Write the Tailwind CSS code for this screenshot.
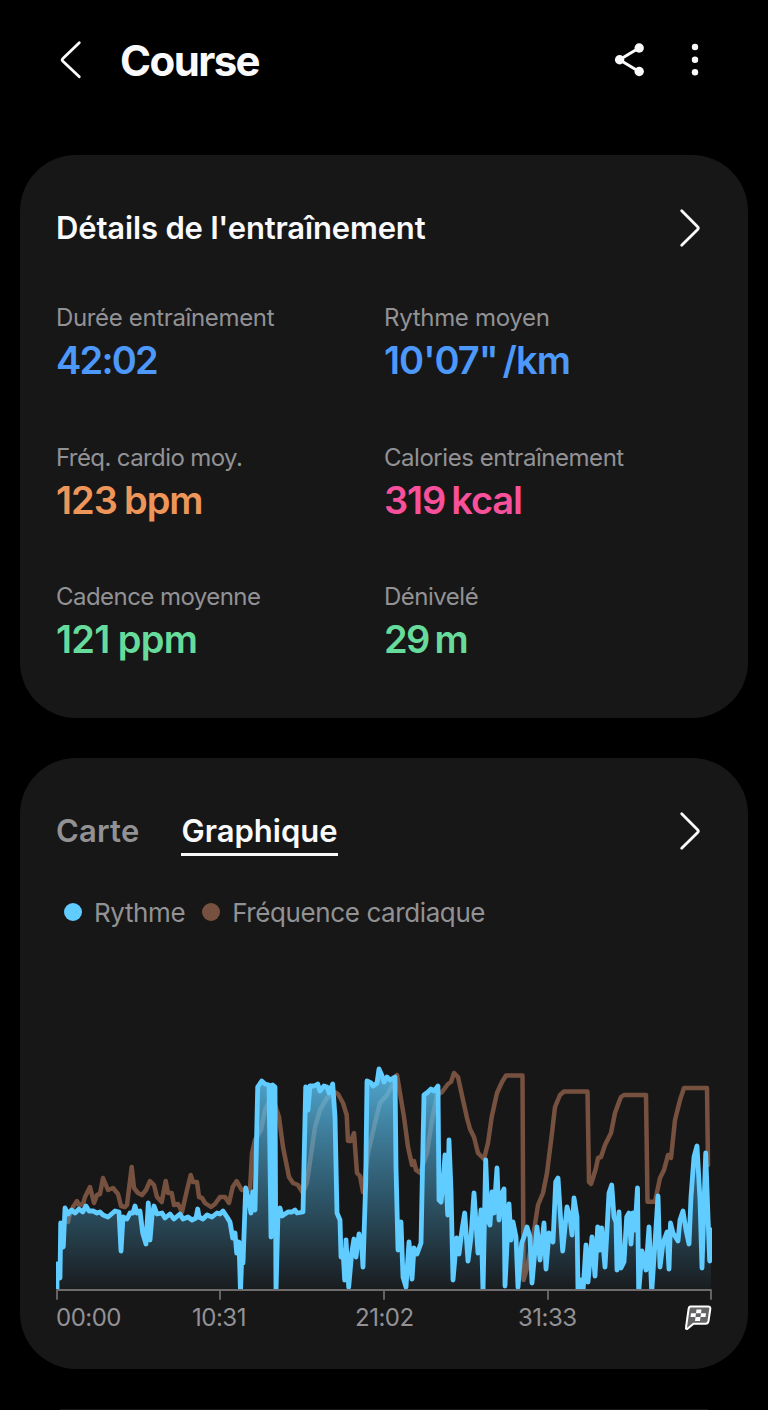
<!DOCTYPE html>
<html lang="fr">
  <head>
    <meta charset="UTF-8" />
    <meta name="viewport" content="width=device-width, initial-scale=1.0" />
    <title>Course</title>
    <script src="https://cdn.jsdelivr.net/npm/@tailwindcss/browser@4"></script>
  </head>
  <body class="bg-black font-['Inter',sans-serif] text-[#fafafc]">

    <!-- Header -->
    <header class="h-[155px] pt-[30px] pl-[56px] pr-[65px]">
      <div class="h-[60px] flex items-center">
        <svg class="w-7 h-10" viewBox="0 0 28 40" fill="none" stroke="currentColor" stroke-width="2.8" stroke-linecap="round" stroke-linejoin="round"><path d="M23.3 2.7 6.9 18.4Q5.5 19.8 6.9 21.2L23.3 36.7" /></svg>
        <h1 class="ml-9 text-[42px] font-bold tracking-[-1.6px] leading-[60px] pt-px">Course</h1>
        <svg class="ml-auto w-8 h-9" viewBox="0 0 32 36" fill="currentColor"><path d="M25 6 5.500 17.800 25 29.500" fill="none" stroke="currentColor" stroke-width="3" /><circle cx="25.200" cy="6" r="4.700" /><circle cx="5.600" cy="17.800" r="4.700" /><circle cx="25.200" cy="29.500" r="4.700" /></svg>
        <svg class="ml-[41px] w-4 h-9" viewBox="0 0 16 36" fill="currentColor"><circle cx="8" cy="5" r="3.200" /><circle cx="8" cy="17.700" r="3.200" /><circle cx="8" cy="30.300" r="3.200" /></svg>
      </div>
    </header>

    <main class="px-5 flex flex-col gap-10">
      <!-- Détails -->
      <section class="h-[563px] shrink-0 rounded-[56px] bg-[#171718] pt-[49px] px-[36px]">
        <div class="h-12 flex items-center justify-between">
          <h2 class="text-[31px] font-semibold tracking-[-0.16px]">Détails de l'entraînement</h2>
          <svg class="mr-[8px] w-7 h-10" viewBox="0 0 28 40" fill="none" stroke="currentColor" stroke-width="2.8" stroke-linecap="round" stroke-linejoin="round"><path d="M5.700 2.700 21.600 18.700Q23 20.100 21.600 21.500L5.700 37.300" /></svg>
        </div>
        <dl class="mt-[49px] grid grid-cols-2 auto-rows-[139.500px]">
          <div>
            <dt class="text-[24px] leading-[34px] text-[#929295] tracking-[-0.35px]">Durée entraînement</dt>
            <dd class="text-[38px] leading-[51px] font-semibold text-[#4d98fb] tracking-[-1.8px]">42:02</dd>
          </div>
          <div>
            <dt class="text-[24px] leading-[34px] text-[#929295] tracking-[-0.3px]">Rythme moyen</dt>
            <dd class="text-[38px] leading-[51px] font-semibold text-[#4d98fb] tracking-[-1px]">10'07"<span class="ml-[5px]">/km</span></dd>
          </div>
          <div>
            <dt class="text-[24px] leading-[34px] text-[#929295] tracking-[-0.6px]">Fréq. cardio moy.</dt>
            <dd class="text-[38px] leading-[51px] font-semibold text-[#ee9659] tracking-[-1px]">123<span class="ml-[7px]">bpm</span></dd>
          </div>
          <div>
            <dt class="text-[24px] leading-[34px] text-[#929295] tracking-[-0.46px]">Calories entraînement</dt>
            <dd class="text-[38px] leading-[51px] font-semibold text-[#f8509a] tracking-[-1.1px]">319<span class="ml-[6px]">kcal</span></dd>
          </div>
          <div>
            <dt class="text-[24px] leading-[34px] text-[#929295] tracking-[-0.55px]">Cadence moyenne</dt>
            <dd class="text-[38px] leading-[51px] font-semibold text-[#66db9b] tracking-[-0.7px]">121<span class="ml-[8px]">ppm</span></dd>
          </div>
          <div>
            <dt class="text-[24px] leading-[34px] text-[#929295] tracking-[-0.5px]">Dénivelé</dt>
            <dd class="text-[38px] leading-[51px] font-semibold text-[#66db9b] tracking-[-1.8px]">29<span class="ml-[6px]">m</span></dd>
          </div>
        </dl>
      </section>

      <!-- Graphique -->
      <section class="h-[611px] shrink-0 rounded-[56px] bg-[#171718] pt-[48px] px-[36px]">
        <div class="h-[50px] flex items-start">
          <span class="text-[31px] leading-[50px] font-semibold text-[#929295] tracking-[0.2px]">Carte</span>
          <span class="ml-[42px] h-[50px] text-[31px] leading-[50px] font-semibold border-b-3 border-[#fafafc] tracking-[0px]">Graphique</span>
          <svg class="ml-auto mr-[8px] mt-[5px] w-7 h-10" viewBox="0 0 28 40" fill="none" stroke="currentColor" stroke-width="2.8" stroke-linecap="round" stroke-linejoin="round"><path d="M5.700 2.700 21.600 18.700Q23 20.100 21.600 21.500L5.700 37.300" /></svg>
        </div>
        <div class="mt-[38px] h-9 pl-[8px] flex items-center text-[26px] text-[#929295] tracking-[-0.4px]">
          <i class="w-[18px] h-[18px] rounded-full bg-[#60ccff]"></i>
          <span class="ml-[12px]">Rythme</span>
          <i class="ml-[17px] w-[18px] h-[18px] rounded-full bg-[#77513f]"></i>
          <span class="ml-[12px]">Fréquence cardiaque</span>
        </div>
        <svg class="mt-[120px] w-[656px] h-[250px]" viewBox="56 1050 656 250" fill="none" stroke-linejoin="round" stroke-linecap="round">
          <defs>
            <linearGradient id="paceFill" gradientUnits="userSpaceOnUse" x1="0" y1="1070" x2="0" y2="1289">
              <stop offset="0" stop-color="#5cc4f4" stop-opacity="0.850" />
              <stop offset="0.650" stop-color="#4aa3cd" stop-opacity="0.380" />
              <stop offset="1" stop-color="#4aa3cd" stop-opacity="0.040" />
            </linearGradient>
            <clipPath id="plot"><path d="M56 1050H712V1289H56Z" /></clipPath>
          </defs>
          <g clip-path="url(#plot)">
            <path id="heart" stroke="#77513f" stroke-width="4.500" />
            <path id="area" fill="url(#paceFill)" />
            <path id="pace" stroke="#60ccff" stroke-width="4.800" />
          </g>
          <path d="M57 1299V1290H711V1299M220 1290V1299M384 1290V1299M548 1290V1299" stroke="#6f6a6c" stroke-width="1.800" />
        </svg>
        <div class="h-9 flex items-center text-[24px] text-[#929295] tracking-[-0.5px]">
          <span class="w-[136px]">00:00</span>
          <span class="w-[163px]">10:31</span>
          <span class="w-[163px]">21:02</span>
          <span>31:33</span>
          <svg class="ml-auto w-7 h-7" viewBox="0 0 28 28"><path d="M6.500 2.500H24Q26.700 2.500 26.300 5L24.500 17Q24 19.700 21.500 19.700H9.500L3.500 24.800Q1.500 25.500 2 23.500L4.600 5Q5 2.500 6.500 2.500Z" fill="#646466" stroke="#fff" stroke-width="2" stroke-linejoin="round" /><path d="M12.500 5.500h5l-.5 3.800h-5zM7 9.300h5l-.5 3.800H6.500zM17 9.300h5l-.5 3.800h-5zM11.500 13.100h5l-.5 3.800h-5z" fill="#fff" /></svg>
        </div>
      </section>

      <!-- Haut de la carte suivante -->
      <section class="h-px mx-[40px] bg-[#171718]"></section>
    </main>

    <script>
      const heart = "68,1222 69,1217 73,1207 77,1201 79,1205 83,1204 85,1197 90,1187 94,1203 97,1195 100,1194 103,1178 108,1190 113,1188 118,1194 121,1206 125,1207 127,1205 131.7,1167 134,1188 138,1193 142,1195 146,1190 150,1181 154,1185 157,1197 161.700,1202 165.700,1181 168,1193 171.700,1193 174,1205 178,1204 182,1212 187,1190 190.700,1175 193,1182 197,1182 199,1197 202,1198 205,1203 211,1207 215,1204 220,1197 225,1197 229,1203 232.700,1187 236.700,1181 241.700,1190 250,1190 252,1153 255,1140 261,1130 265,1110 269,1102 275,1105 279,1117 283,1147 287,1167 289,1177 293,1183 298,1185 303,1193 307,1182 311.700,1150 315,1127 320,1110 327,1098 335,1092 338,1094 343,1103 346.700,1115 348,1141 351,1141 354,1133 357,1173 360,1176 363,1192 368,1153 375,1123 380,1103 387,1095 393,1084 397,1075 400,1093 404,1117 408,1147 412,1165 414,1161 416,1170 420,1173 427,1153 432,1120 437,1095 442,1092 448,1084 451,1082 454,1073 458,1077 463,1100 467,1118 470,1129 474,1137 478,1153 484,1159 488,1143 491.700,1117 497,1093 502,1082 506,1075.500 522.500,1075.500 523.500,1280 527,1268 533,1237 538,1205 543,1193 547,1173 552,1133 555,1107 560,1095 564,1091.500 587.500,1091.500 589,1182 591,1184 593,1178 596,1168 598,1158 601,1157 605,1145 611,1133 615,1113 619,1102 621,1097 624,1095 646,1095 647.500,1201.700 655,1201.700 660,1178 664,1170 668,1155 671,1158 675,1120 680,1100 684,1088 707,1088 708,1165";
      const pace = "57,1289 57,1264 60,1278 60.700,1223 63.300,1247 65,1208 68,1214 71.700,1210 75,1213 79,1209 82.700,1212 86,1206 89,1211 93,1211 97,1213 100,1212 103,1215 108,1217 115,1211 119,1212 121,1251 123,1217 127,1219 130,1213 133,1213 135,1206 137,1213 140,1211 142.700,1233 146,1244 148.300,1203 150,1240 152,1216 154,1206 157,1214 162,1213 165,1218 170,1214 174,1219 180,1214 183,1219 188,1217 192,1220 196,1218 197.700,1209 199,1217 203,1219 207,1215 212,1217 217,1213 220,1214 223,1211 227,1217 230,1222 232.700,1238 235,1233 236.700,1253 239,1242 240.500,1292 242,1250 243,1263 245.700,1188 248,1197 251,1213 252.700,1192 255,1210 257.700,1087 261.700,1081 265,1084 269,1085 271,1237 272.700,1085 275,1087 276,1292 278,1213 280,1208 282,1216 288,1212 292,1212 295,1210 297,1213 303,1212 305.700,1087 308,1110 310,1086 314,1086 317.700,1084 320,1091 324,1086 327,1087 329,1093 332.700,1084 335,1117 337,1213 340,1220 341,1257 343,1250 344.700,1280 346,1240 348.700,1287 351.700,1253 354,1239 356,1257 359,1234 361.700,1245 363,1267 365.700,1183 367,1081 371,1083 373,1086 377,1083 379,1069 381.700,1075 384,1082 387,1077 390,1080 395,1077 396,1167 398,1250 401,1222 403,1277 406,1287 409,1242 412,1279 414,1248 417,1254 421,1243 424,1095 428,1092 431,1089 434,1091 438,1086 439,1200 441,1202 443,1183 445,1155 447.700,1215 449,1140 451,1190 453,1280 456.700,1238 459,1254 462,1230 464.700,1213 468,1261 471,1237 474,1193 478,1253 481,1210 483,1292 485.700,1160 488,1220 490,1225 492,1192 494,1213 497,1168 499,1220 502,1193 504,1189 505,1286 509,1204 511,1240 513,1222 516,1237 518,1287 521.700,1243 524,1237 527,1227 530,1237 532,1283 535,1250 537,1227 540,1260 544,1223 546,1269 549,1233 553,1242 555.700,1182 558,1178 562.700,1251 567,1207 570,1217 572,1235 574,1198 577,1217 578,1292 581,1280 583,1292 586,1245 588,1282 592,1237 595,1276 597.700,1227 600,1250 601.700,1228 605,1267 609,1193 611.700,1185 614,1217 616,1222 617,1270 619,1212 621,1268 624,1262 626.700,1217 629,1213 631,1244 633,1213 635,1230 637.500,1188 638.700,1292 642,1251 646,1270 649,1227 651.700,1292 655,1243 658,1196 660,1267 663,1243 667,1232 669,1269 670.500,1223 673,1233 678,1241 680,1220 683,1211 686,1230 689,1244 691,1197 694,1157 697,1146 700,1200 702,1268 705.700,1153 708,1217 709.700,1261 711,1230";
      document.getElementById("heart").setAttribute("d", "M" + heart);
      document.getElementById("pace").setAttribute("d", "M" + pace);
      document.getElementById("area").setAttribute("d", "M" + pace + " 711,1289 57,1289Z");
    </script>
  </body>
</html>
